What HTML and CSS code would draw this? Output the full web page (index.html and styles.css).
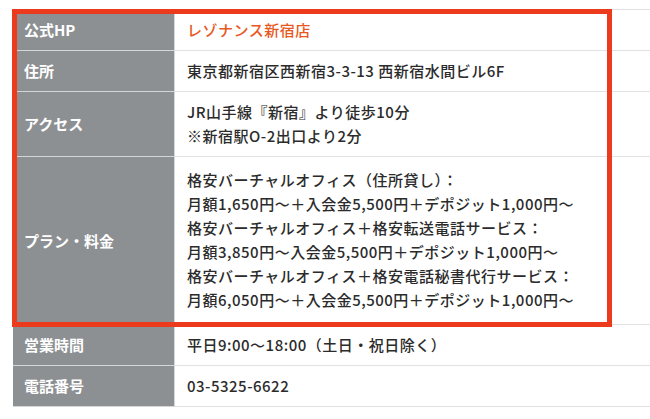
FILE: index.html
```html
<!DOCTYPE html>
<html lang="ja">
<head>
<meta charset="utf-8">
<link rel="stylesheet" href="styles.css">
</head>
<body>
<div class="wrap">
  <table class="info">
    <tr>
      <th>公式HP</th>
      <td class="link">レゾナンス新宿店</td>
    </tr>
    <tr>
      <th>住所</th>
      <td>東京都新宿区西新宿3-3-13 西新宿水間ビル6F</td>
    </tr>
    <tr>
      <th>アクセス</th>
      <td>JR山手線『新宿』より徒歩10分<br>※新宿駅O-2出口より2分</td>
    </tr>
    <tr class="plan">
      <th>プラン・料金</th>
      <td>格安バーチャルオフィス（住所貸し）：<br>月額1,650円～＋入会金5,500円＋デポジット1,000円～<br>格安バーチャルオフィス＋格安転送電話サービス：<br>月額3,850円～入会金5,500円＋デポジット1,000円～<br>格安バーチャルオフィス＋格安電話秘書代行サービス：<br>月額6,050円～＋入会金5,500円＋デポジット1,000円～</td>
    </tr>
    <tr>
      <th>営業時間</th>
      <td>平日9:00～18:00（土日・祝日除く）</td>
    </tr>
    <tr>
      <th>電話番号</th>
      <td>03-5325-6622</td>
    </tr>
  </table>
  <div class="highlight"></div>
</div>
</body>
</html>
```
FILE: styles.css
```css
html, body {
  margin: 0;
  padding: 0;
  background: #ffffff;
  overflow: hidden;
}
body {
  font-family: "Noto Sans CJK JP", "Noto Sans", sans-serif;
  font-size: 15px;
  color: #2b2b2b;
}
.wrap {
  position: relative;
  margin: 9px 0 0 13px;
}
.info {
  width: 100%;
  border-collapse: collapse;
  border-top: 1px solid #e2e2e2;
}
.info th,
.info td {
  line-height: 24px;
  padding: 8px 12px;
  text-align: left;
  vertical-align: middle;
  border-bottom: 1px solid #e2e2e2;
}
.info th {
  width: 138px;
  background: #8d9093;
  color: #ffffff;
  font-weight: bold;
  padding-left: 11px;
  border-bottom-color: #d4d6d8;
  border-right: 1px solid #d4d6d8;
}
.info td {
  padding-left: 12px;
  font-weight: 500;
  letter-spacing: 0.5px;
}
.info .plan td {
  padding-top: 11px;
  padding-bottom: 12px;
}
.info .link {
  color: #e8581e;
}
.highlight {
  position: absolute;
  left: -1px;
  top: 0;
  width: 590px;
  height: 308px;
  border: 5px solid #ec3a1c;
}
```
